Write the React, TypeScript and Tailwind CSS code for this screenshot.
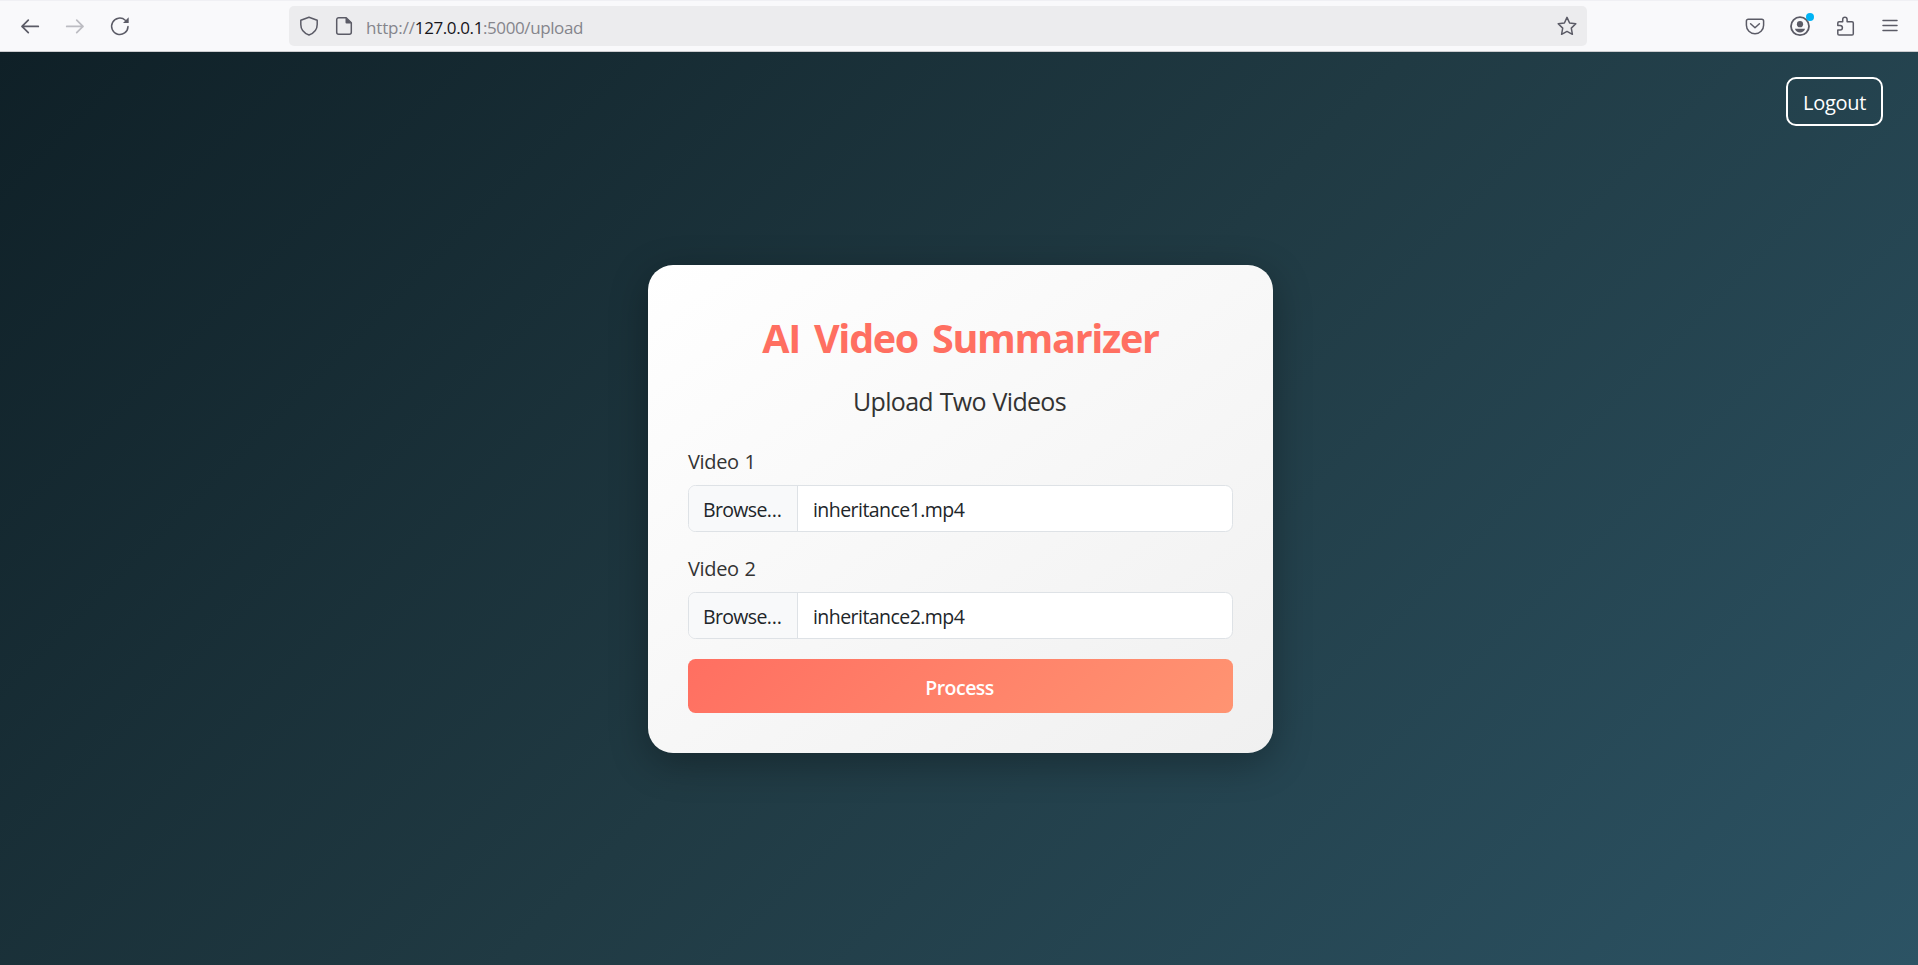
import type { ReactNode } from "react";

const stroke = {
  fill: "none",
  stroke: "currentColor",
  strokeWidth: 1.5,
  strokeLinecap: "round" as const,
  strokeLinejoin: "round" as const,
};

function Icon({ children, className = "" }: { children: ReactNode; className?: string }) {
  return (
    <svg viewBox="0 0 20 20" className={`block size-5 shrink-0 overflow-visible ${className}`} {...stroke}>
      {children}
    </svg>
  );
}

function Toolbar() {
  return (
    <header className="flex h-[52px] shrink-0 items-center border-t border-b border-t-[#f0f0f4] border-b-[#cccccf] bg-[#f9f9fb] text-[#5b5b66]">
      <nav className="flex w-[289px] shrink-0 items-center gap-[25px] pl-5">
        <Icon>
          <path d="M18.3 10.4H2M8.3 4.1L2 10.4l6.3 6.3" strokeWidth="1.7" />
        </Icon>
        <Icon className="text-[#bcbcc2]">
          <path d="M1.7 10.4H18M11.7 4.1l6.3 6.3-6.3 6.3" strokeWidth="1.7" />
        </Icon>
        <Icon>
          <path d="M18 10.6a8.2 8.2 0 1 1-2.7-6.4" />
          <path d="M18.7 1.3v5.8H13z" fill="currentColor" stroke="none" />
        </Icon>
      </nav>
      <div className="flex h-10 w-[1298px] shrink-0 items-center rounded-[5px] bg-[#ececee] px-[10px]">
        <Icon>
          <path d="M10 1.2L18.2 4.3v4.2c0 4.6-3 8.6-8.2 10.5C4.8 17.1 1.8 13.1 1.8 8.5V4.3z" />
        </Icon>
        <Icon className="ml-[15px]">
          <path d="M12.2 1.7H4.7a2 2 0 0 0-2 2v12.6a2 2 0 0 0 2 2h10.6a2 2 0 0 0 2-2V6.8z" />
          <path d="M11.5 1.2v5.2a1 1 0 0 0 1 1h5.2z" fill="currentColor" stroke="none" />
        </Icon>
        <p className="ml-[12px] flex-1 pt-1 text-[17px] tracking-[-0.4px] text-[#85858c]">
          <span className="tracking-[-0.15px]">http://</span>
          <span className="text-[#15141a]">127.0.0.1</span>:5000/upload
        </p>
        <Icon>
          <path d="M10 1.4l2.6 5.6 6.2.8-4.500 4.300 1.100 6.200L10 15.400l-5.400 2.900 1.100-6.200L1.200 7.800l6.200-.8z" />
        </Icon>
      </div>
      <div className="ml-auto flex items-center gap-[25px] pr-[18px]">
        <Icon>
          <path d="M3.2 3.2h13.6a1.8 1.8 0 0 1 1.8 1.8v4.2a8.6 8.6 0 0 1-17.2 0V5A1.8 1.8 0 0 1 3.2 3.2zM5.6 7.7L10 11.7l4.4-4" />
        </Icon>
        <div className="relative">
          <Icon>
            <circle cx="10" cy="10.2" r="9" strokeWidth="1.8" />
            <circle cx="10" cy="8.2" r="3.1" fill="currentColor" stroke="none" />
            <path d="M4.9 12.8h10.2c-.9 2.6-2.7 3.7-5.1 3.7s-4.2-1.1-5.1-3.7z" fill="currentColor" stroke="none" />
          </Icon>
          <span className="absolute -top-[3px] -right-[4px] size-2 rounded-full bg-[#00b3f4]" />
        </div>
        <Icon>
          <path d="M2.8 9.5V7a1.3 1.3 0 0 1 1.3-1.3h3.6V3.5a2.2 2.2 0 0 1 4.4 0v2.2h4.9A1.3 1.3 0 0 1 18.3 7v10.7a1.3 1.3 0 0 1-1.3 1.3H4.1a1.3 1.3 0 0 1-1.3-1.3v-3.6h2.3a2.3 2.3 0 0 0 0-4.6z" />
        </Icon>
        <Icon>
          <path d="M3 4.5h14M3 9.5h14M3 14.5h14" />
        </Icon>
      </div>
    </header>
  );
}

function FileField({ label, file }: { label: string; file: string }) {
  return (
    <div className="mb-5">
      <label className="mb-2 block pt-0.5 leading-[30px] tracking-[-0.35px] text-[#333] [word-spacing:1px]">{label}</label>
      <div className="flex h-[47px] overflow-hidden rounded-[7.5px] border border-[#dee2e6] bg-white text-[#212529]">
        <button className="w-[109px] shrink-0 border-r border-[#dee2e6] bg-[#f8f9fa] pt-0.5 pl-[14px] text-left text-[19.5px] tracking-[-0.65px]">
          Browse…
        </button>
        <span className="self-center pt-0.5 pl-[15px] text-[19.5px] tracking-[-0.55px]">{file}</span>
      </div>
    </div>
  );
}

export default function App() {
  return (
    <div className="flex h-screen flex-col overflow-hidden font-['Open_Sans',sans-serif] text-[20px]">
      <Toolbar />
      <main className="relative flex flex-1 items-center justify-center bg-[linear-gradient(135deg,#0f2027,#203a43,#2c5364)]">
        <button className="absolute top-[25px] right-[35px] h-[49px] w-[97px] rounded-[10px] border-2 border-white pt-0.5 tracking-[-0.3px] text-white">
          Logout
        </button>
        <section className="mt-px ml-[3px] h-[488px] w-[625px] rounded-[25px] bg-[linear-gradient(145deg,#ffffff,#f0f0f0)] p-10 shadow-[0_10px_38px_rgba(0,0,0,0.3)]">
          <h1 className="mb-[18px] pt-[3px] text-center text-[39.5px] leading-[60px] font-bold tracking-[-1.3px] text-[#ff6f61] [word-spacing:5px]">
            AI Video Summarizer
          </h1>
          <h2 className="mb-[29px] pr-0.5 text-center text-[25px] leading-[30px] tracking-[-0.7px] text-[#333] [word-spacing:1px]">
            Upload Two Videos
          </h2>
          <FileField label="Video 1" file="inheritance1.mp4" />
          <FileField label="Video 2" file="inheritance2.mp4" />
          <button className="h-[54px] w-full rounded-[7.5px] bg-[linear-gradient(135deg,#ff6f61,#ff9472)] pt-1 pr-0.5 text-[19.5px] font-semibold tracking-[-0.5px] text-white">
            Process
          </button>
        </section>
      </main>
    </div>
  );
}
